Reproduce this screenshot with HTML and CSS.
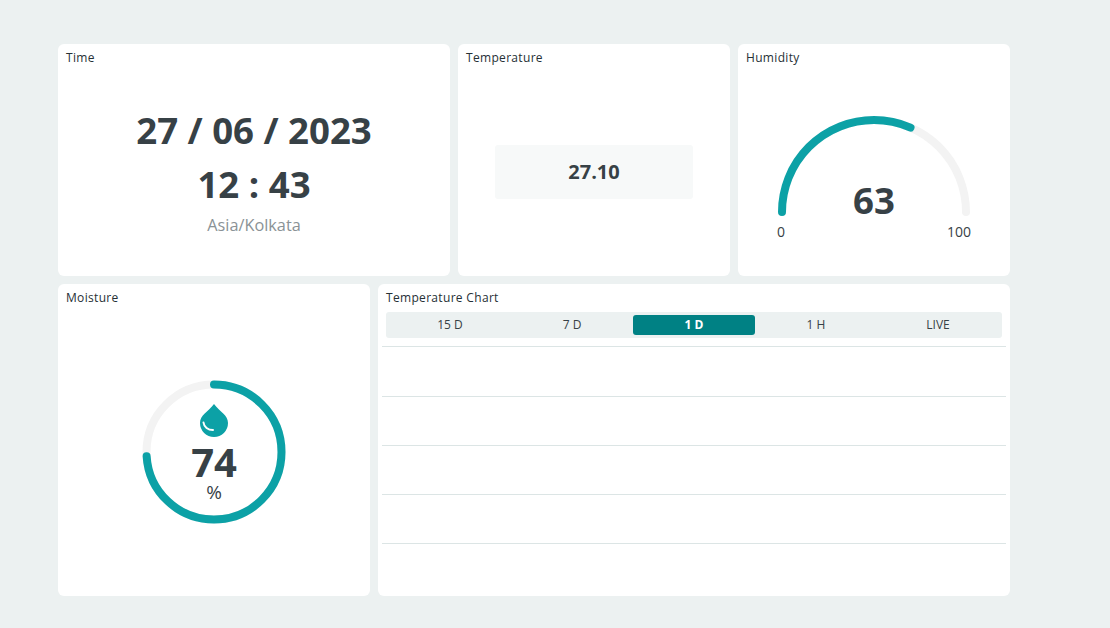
FILE: index.html
```html
<!DOCTYPE html>
<html lang="en">
<head>
    <meta charset="UTF-8">
    <title>Dashboard</title>
    <link rel="stylesheet" href="styles.css">
</head>
<body>
    <main class="dashboard">
        <section class="card span-10 row-top">
            <h2 class="card-title">Time</h2>
            <div class="card-body time">
                <div class="time-big">27 / 06 / 2023</div>
                <div class="time-big">12 : 43</div>
                <div class="time-zone">Asia/Kolkata</div>
            </div>
        </section>

        <section class="card span-7 row-top">
            <h2 class="card-title">Temperature</h2>
            <div class="card-body">
                <div class="value-box">27.10</div>
            </div>
        </section>

        <section class="card span-7 row-top">
            <h2 class="card-title">Humidity</h2>
            <div class="card-body">
                <div class="gauge">
                    <svg class="gauge-svg" width="200" height="111" viewBox="0 0 200 111">
                        <path class="track" d="M8 100 A92 92 0 0 1 192 100"/>
                        <path class="progress" pathLength="100" stroke-dasharray="63 100" d="M8 100 A92 92 0 0 1 192 100"/>
                    </svg>
                    <div class="gauge-value">63</div>
                    <div class="gauge-scale">
                        <span>0</span>
                        <span>100</span>
                    </div>
                </div>
            </div>
        </section>

        <section class="card span-8 row-bottom">
            <h2 class="card-title">Moisture</h2>
            <div class="card-body">
                <div class="donut">
                    <svg width="144" height="144" viewBox="0 0 144 144">
                        <circle class="track" cx="72" cy="72" r="67.5"/>
                        <circle class="progress" cx="72" cy="72" r="67.5" pathLength="100" stroke-dasharray="74 100" transform="rotate(-90 72 72)"/>
                        <path class="drop" d="M72 24 C66 32 58 35 58 43 A14 14 0 0 0 86 43 C86 35 78 32 72 24 Z"/>
                        <path class="drop-shine" d="M61.500 42.500 C62 47 66 50 71 50"/>
                    </svg>
                    <div class="donut-text">
                        <div class="donut-value">74</div>
                        <div class="donut-unit">%</div>
                    </div>
                </div>
            </div>
        </section>

        <section class="card span-16 row-bottom">
            <h2 class="card-title">Temperature Chart</h2>
            <div class="tabs">
                <div class="tab">15 D</div>
                <div class="tab">7 D</div>
                <div class="tab tab-active">1 D</div>
                <div class="tab">1 H</div>
                <div class="tab">LIVE</div>
            </div>
            <div class="chart">
                <div class="chart-line"></div>
                <div class="chart-line"></div>
                <div class="chart-line"></div>
                <div class="chart-line"></div>
                <div class="chart-line"></div>
            </div>
        </section>
    </main>
</body>
</html>
```

FILE: styles.css
```css
body {
    font-family: 'Open Sans', sans-serif;
    margin: 0;
    padding: 44px 0 32px 58px;
    background-color: #ecf1f1;
    color: #374146;
}

.dashboard {
    display: grid;
    grid-template-columns: repeat(24, 32px);
    grid-template-rows: 232px 312px;
    gap: 8px;
}

.span-7 { grid-column: span 7; }
.span-8 { grid-column: span 8; }
.span-10 { grid-column: span 10; }
.span-16 { grid-column: span 16; }

.card {
    display: flex;
    flex-direction: column;
    background-color: #ffffff;
    border-radius: 6px;
    padding: 7px 8px 8px;
}

.card-title {
    margin: 0;
    font-size: 12px;
    line-height: 14px;
    font-weight: 500;
    letter-spacing: 0.32px;
    color: #263035;
}

.card-body {
    flex: 1;
    display: flex;
    flex-direction: column;
    align-items: center;
    justify-content: center;
    padding-top: 10px;
}

/* time */
.time {
    padding-top: 7px;
}

.time-big {
    font-size: 36.6px;
    line-height: 54px;
    font-weight: 700;
}

.time-zone {
    margin-top: 1px;
    font-size: 16.3px;
    line-height: 26px;
    color: #8a9296;
}

/* temperature */
.value-box {
    width: 198px;
    height: 54px;
    display: flex;
    align-items: center;
    justify-content: center;
    background-color: #f7f9f9;
    border-radius: 3px;
    font-size: 20px;
    font-weight: 700;
}

/* gauge and donut */
.track,
.progress {
    fill: none;
    stroke-width: 8;
    stroke-linecap: round;
}

.track {
    stroke: #f3f3f3;
}

.progress {
    stroke: #0ca1a6;
}

.gauge {
    position: relative;
    width: 200px;
    margin-top: 9px;
}

.gauge-svg {
    display: block;
}

.gauge-value {
    position: absolute;
    left: 0;
    right: 0;
    top: 61px;
    text-align: center;
    font-size: 36.6px;
    line-height: 54px;
    font-weight: 700;
}

.gauge-scale {
    display: flex;
    justify-content: space-between;
    padding: 0 3px;
    font-size: 14px;
    line-height: 18px;
}

.donut {
    position: relative;
    width: 144px;
    height: 144px;
}

.donut svg {
    display: block;
}

.drop {
    fill: #0ca1a6;
}

.drop-shine {
    fill: none;
    stroke: #ffffff;
    stroke-width: 2;
    stroke-linecap: round;
}

.donut-text {
    position: absolute;
    left: 0;
    right: 0;
    top: 62px;
    text-align: center;
}

.donut-value {
    font-size: 40px;
    line-height: 40px;
    font-weight: 700;
}

.donut-unit {
    font-size: 19px;
    line-height: 20px;
}

/* chart */
.tabs {
    display: flex;
    margin-top: 7px;
    padding: 3px;
    height: 20px;
    background-color: #ecf1f1;
    border-radius: 3px;
}

.tab {
    flex: 1;
    text-align: center;
    font-size: 12px;
    line-height: 20px;
}

.tab-active {
    background-color: #008184;
    border-radius: 3px;
    color: #ffffff;
    font-weight: 700;
}

.chart {
    margin: 8px -4px 0;
}

.chart-line {
    height: 49px;
    box-sizing: border-box;
    border-top: 1px solid #dce5e5;
}

.chart-line:first-child {
    height: 50px;
}
```
